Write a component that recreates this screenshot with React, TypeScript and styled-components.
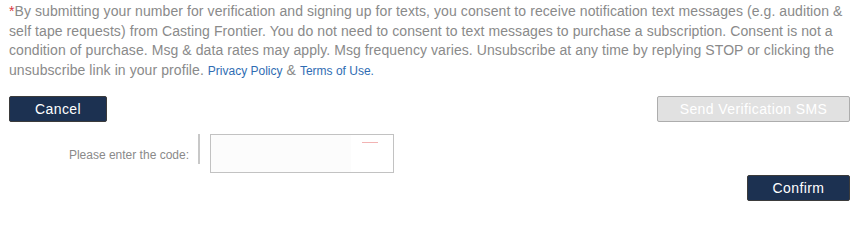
import React from "react";
import styled, { createGlobalStyle } from "styled-components";

const GlobalStyle = createGlobalStyle`
  body {
    margin: 0;
    background: #fff;
    font-family: "Liberation Sans", Arial, Helvetica, sans-serif;
  }
`;

const App = () => {
  return (
    <Wrap>
      <GlobalStyle />
      <Notice>
        <Star>*</Star>By submitting your number for verification and signing up for texts, you
        consent to receive notification text messages (e.g. audition &amp; self tape requests)
        from Casting Frontier. You do not need to consent to text messages to purchase a
        subscription. Consent is not a condition of purchase. Msg &amp; data rates may apply. Msg
        frequency varies. Unsubscribe at any time by replying STOP or clicking the unsubscribe
        link in your profile. <Link href="#">Privacy Policy</Link> &amp;{" "}
        <Link href="#">Terms of Use.</Link>
      </Notice>
      <ButtonRow>
        <Btn $w={98}>Cancel</Btn>
        <Btn $w={193} $disabled disabled>
          Send Verification SMS
        </Btn>
      </ButtonRow>
      <CodeRow>
        <Label>Please enter the code:</Label>
        <Divider />
        <CodeInput>
          <Mark />
        </CodeInput>
      </CodeRow>
      <Footer>
        <Btn $w={103}>Confirm</Btn>
      </Footer>
    </Wrap>
  );
};

export default App;

const Wrap = styled.div`
  width: 863px;
  padding: 2px 13px 0 9px;
  box-sizing: border-box;
`;

const Notice = styled.p`
  margin: 0;
  font-size: 14px;
  letter-spacing: 0.08px;
  line-height: 19.7px;
  color: #8a8a8a;
`;

const Star = styled.span`
  color: #d9363e;
`;

const Link = styled.a`
  color: #2f6db3;
  font-size: 12px;
  letter-spacing: 0;
  text-decoration: none;
`;

const ButtonRow = styled.div`
  display: flex;
  justify-content: space-between;
  margin-top: 14px;
`;

const Btn = styled.button<{ $w: number; $disabled?: boolean }>`
  width: ${(p) => p.$w}px;
  height: 26px;
  padding: 0;
  border-radius: 2px;
  font-family: "Liberation Sans", Arial, sans-serif;
  font-size: 14px;
  letter-spacing: 0.4px;
  color: #fff;
  background: ${(p) => (p.$disabled ? "#e1e1e1" : "#1c3151")};
  border: 1px solid ${(p) => (p.$disabled ? "#adadad" : "#3b3b3b")};
  cursor: ${(p) => (p.$disabled ? "default" : "pointer")};
`;

const CodeRow = styled.div`
  display: flex;
  align-items: flex-start;
  margin-top: 12px;
`;

const Label = styled.span`
  width: 180px;
  text-align: right;
  font-size: 12px;
  color: #8a8a8a;
  margin-top: 14px;
`;

const Divider = styled.div`
  width: 2px;
  height: 30px;
  background: #c8c8c8;
  margin-left: 9px;
`;

const CodeInput = styled.div`
  position: relative;
  width: 184px;
  height: 39px;
  margin-left: 10px;
  box-sizing: border-box;
  border: 1px solid #c2c2c2;
  background: linear-gradient(to right, #fcfcfc 77%, #fff 77%);
`;

const Mark = styled.span`
  position: absolute;
  top: 7px;
  left: 151px;
  width: 16px;
  height: 1px;
  background: #f2b3b3;
`;

const Footer = styled.div`
  display: flex;
  justify-content: flex-end;
  margin-top: 2px;
`;
